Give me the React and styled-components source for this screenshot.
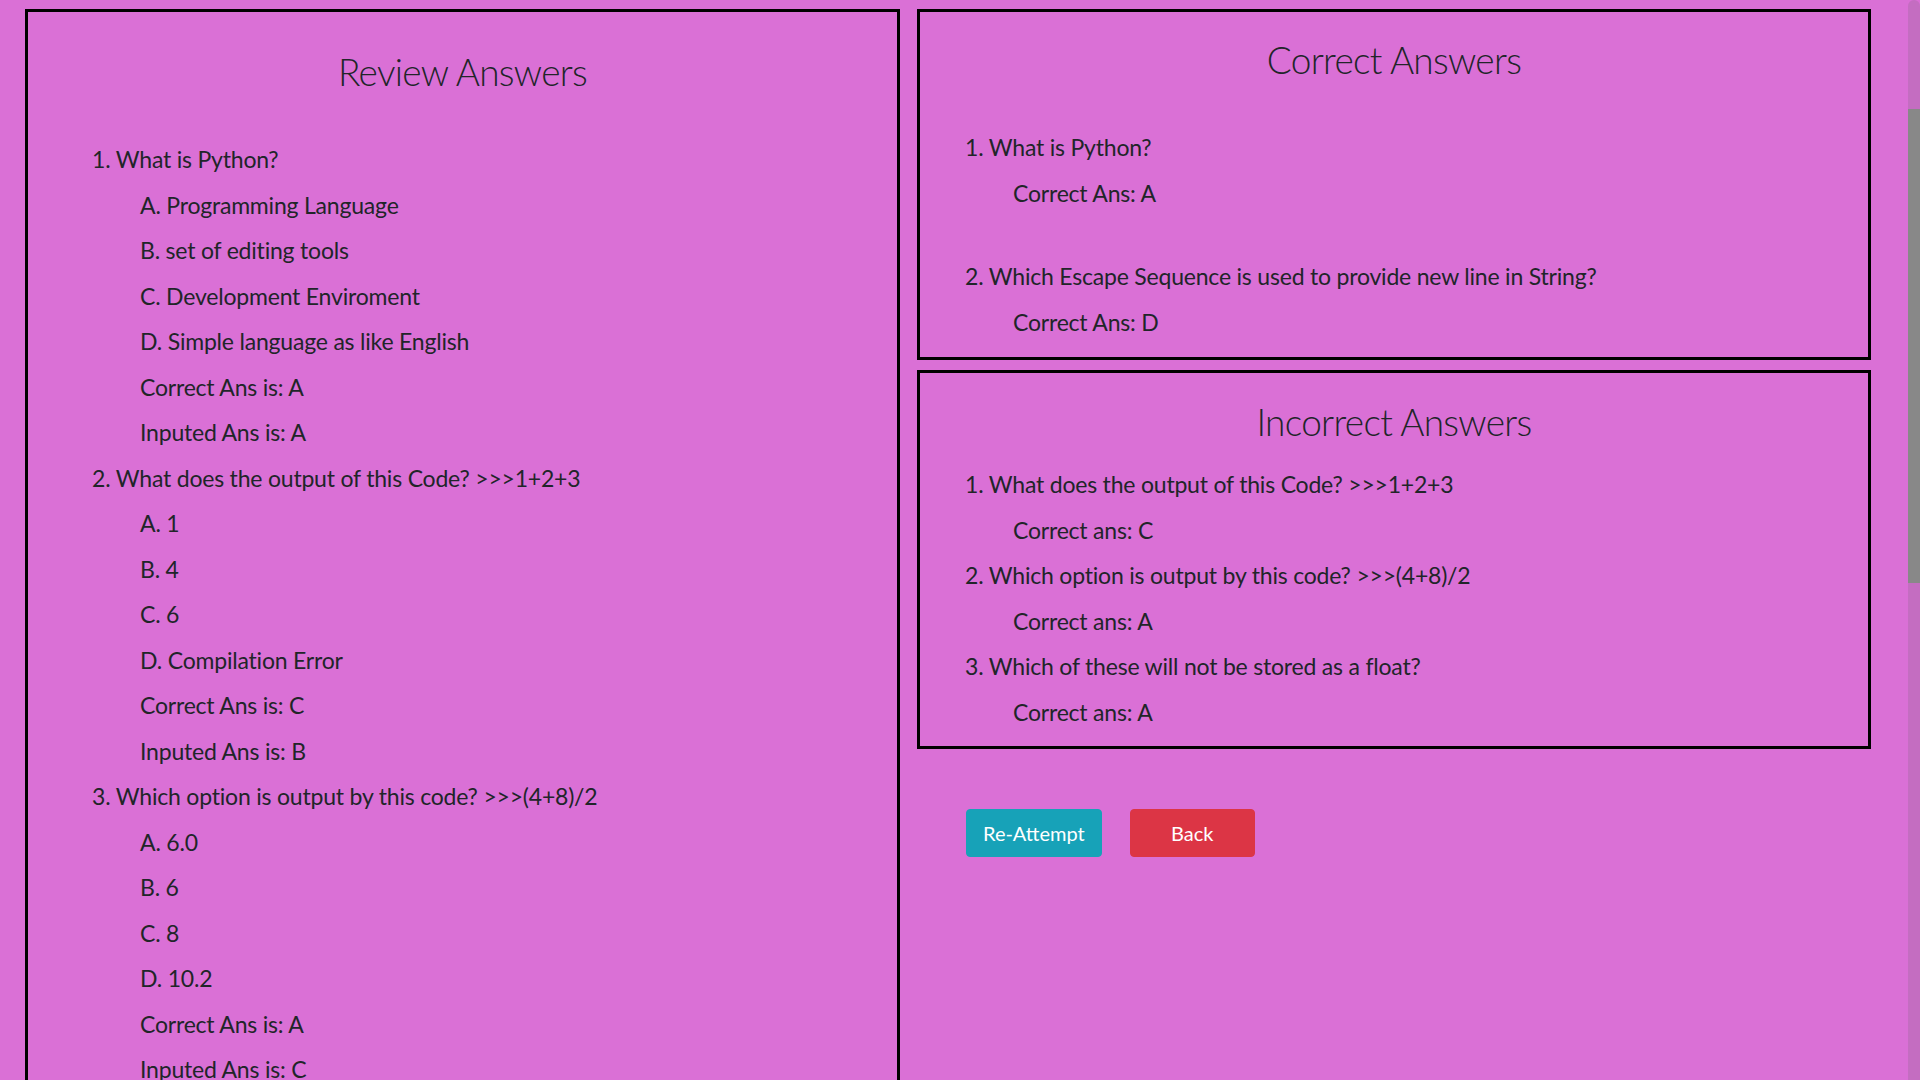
import React from "react";
import styled, { createGlobalStyle } from "styled-components";

const GlobalStyle = createGlobalStyle`
  html, body {
    margin: 0;
    padding: 0;
    background: #da70d6;
  }
  body {
    font-family: Lato, "Noto Sans", "Liberation Sans", sans-serif;
    color: #212529;
  }
  ::-webkit-scrollbar {
    width: 0;
  }
`;

const Page = styled.div`
  display: flex;
  align-items: flex-start;
  gap: 17px;
  padding: 9px 0 40px 25px;
`;

const Panel = styled.section`
  box-sizing: border-box;
  width: ${(p) => p.$width}px;
  border: 3px solid #000;
  padding: ${(p) => p.$pad};
`;

const List = styled.div`
  padding-left: ${(p) => p.$inset}px;
`;

const Column = styled.div`
  display: flex;
  flex-direction: column;
  gap: 10px;
`;

const Heading = styled.h1`
  margin: 0 0 ${(p) => p.$gap}px;
  text-align: center;
  font-weight: 300;
  font-size: 37px;
  letter-spacing: -0.7px;
  line-height: 48px;
  color: #212529;
`;

const Line = styled.p`
  margin: 0 0 ${(p) => (p.$extra ? 47.5 : 9.5)}px;
  padding-left: ${(p) => (p.$indent ? 48 : 0)}px;
  font-size: 23px;
  letter-spacing: -0.2px;
  line-height: 36px;
  font-weight: 400;
`;

const ButtonRow = styled.div`
  display: flex;
  gap: 28px;
  margin: 50px 0 0 49px;
`;

const Button = styled.button`
  box-sizing: border-box;
  height: 48px;
  min-width: ${(p) => p.$minWidth || 0}px;
  padding: 0 16px;
  border: 1px solid ${(p) => p.$bg};
  border-radius: 4px;
  background: ${(p) => p.$bg};
  color: #fff;
  font-family: inherit;
  font-size: 20px;
  line-height: 30px;
  cursor: pointer;
`;

const ScrollTrack = styled.div`
  position: fixed;
  top: 0;
  right: 0;
  bottom: 0;
  width: 12px;
  border-radius: 6px 6px 0 0;
  background: rgba(120, 100, 120, 0.22);
`;

const ScrollThumb = styled.div`
  position: absolute;
  left: 0;
  right: 0;
  top: 109px;
  height: 474px;
  background: #888888;
`;

const review = [
  {
    q: "What is Python?",
    opts: ["Programming Language", "set of editing tools", "Development Enviroment", "Simple language as like English"],
    correct: "A",
    input: "A",
  },
  {
    q: "What does the output of this Code? >>>1+2+3",
    opts: ["1", "4", "6", "Compilation Error"],
    correct: "C",
    input: "B",
  },
  {
    q: "Which option is output by this code? >>>(4+8)/2",
    opts: ["6.0", "6", "8", "10.2"],
    correct: "A",
    input: "C",
  },
  {
    q: "Which Escape Sequence is used to provide new line in String?",
    opts: ["\\t", "\\r", "\\b", "\\n"],
    correct: "D",
    input: "D",
  },
  {
    q: "Which of these will not be stored as a float?",
    opts: ["32", "32.0", "1e2", "3.14"],
    correct: "A",
    input: "B",
  },
];

const correctList = [
  { q: "What is Python?", a: "A" },
  { q: "Which Escape Sequence is used to provide new line in String?", a: "D" },
];

const incorrectList = [
  { q: "What does the output of this Code? >>>1+2+3", a: "C" },
  { q: "Which option is output by this code? >>>(4+8)/2", a: "A" },
  { q: "Which of these will not be stored as a float?", a: "A" },
];

const letters = ["A", "B", "C", "D"];

export default function App() {
  return (
    <>
      <GlobalStyle />
      <Page>
        <Panel $width={875} $pad="36px 0 20px">
          <Heading $gap={45}>Review Answers</Heading>
          <List $inset={64}>
            {review.map((item, i) => (
              <div key={i}>
                <Line>
                  {i + 1}. {item.q}
                </Line>
                {item.opts.map((o, j) => (
                  <Line $indent key={j}>
                    {letters[j]}. {o}
                  </Line>
                ))}
                <Line $indent>Correct Ans is: {item.correct}</Line>
                <Line $indent>Inputed Ans is: {item.input}</Line>
              </div>
            ))}
          </List>
        </Panel>
        <Column>
          <Panel $width={954} $pad="24px 0 8px">
            <Heading $gap={45}>Correct Answers</Heading>
            <List $inset={45}>
              {correctList.map((item, i) => (
                <div key={i}>
                  <Line>
                    {i + 1}. {item.q}
                  </Line>
                  <Line $indent $extra={i < correctList.length - 1}>
                    Correct Ans: {item.a}
                  </Line>
                </div>
              ))}
            </List>
          </Panel>
          <Panel $width={954} $pad="25px 0 7px">
            <Heading $gap={20}>Incorrect Answers</Heading>
            <List $inset={45}>
              {incorrectList.map((item, i) => (
                <div key={i}>
                  <Line>
                    {i + 1}. {item.q}
                  </Line>
                  <Line $indent>Correct ans: {item.a}</Line>
                </div>
              ))}
            </List>
          </Panel>
          <ButtonRow>
            <Button $bg="#17a2b8">Re-Attempt</Button>
            <Button $bg="#dc3545" $minWidth={125}>
              Back
            </Button>
          </ButtonRow>
        </Column>
      </Page>
      <ScrollTrack>
        <ScrollThumb />
      </ScrollTrack>
    </>
  );
}
